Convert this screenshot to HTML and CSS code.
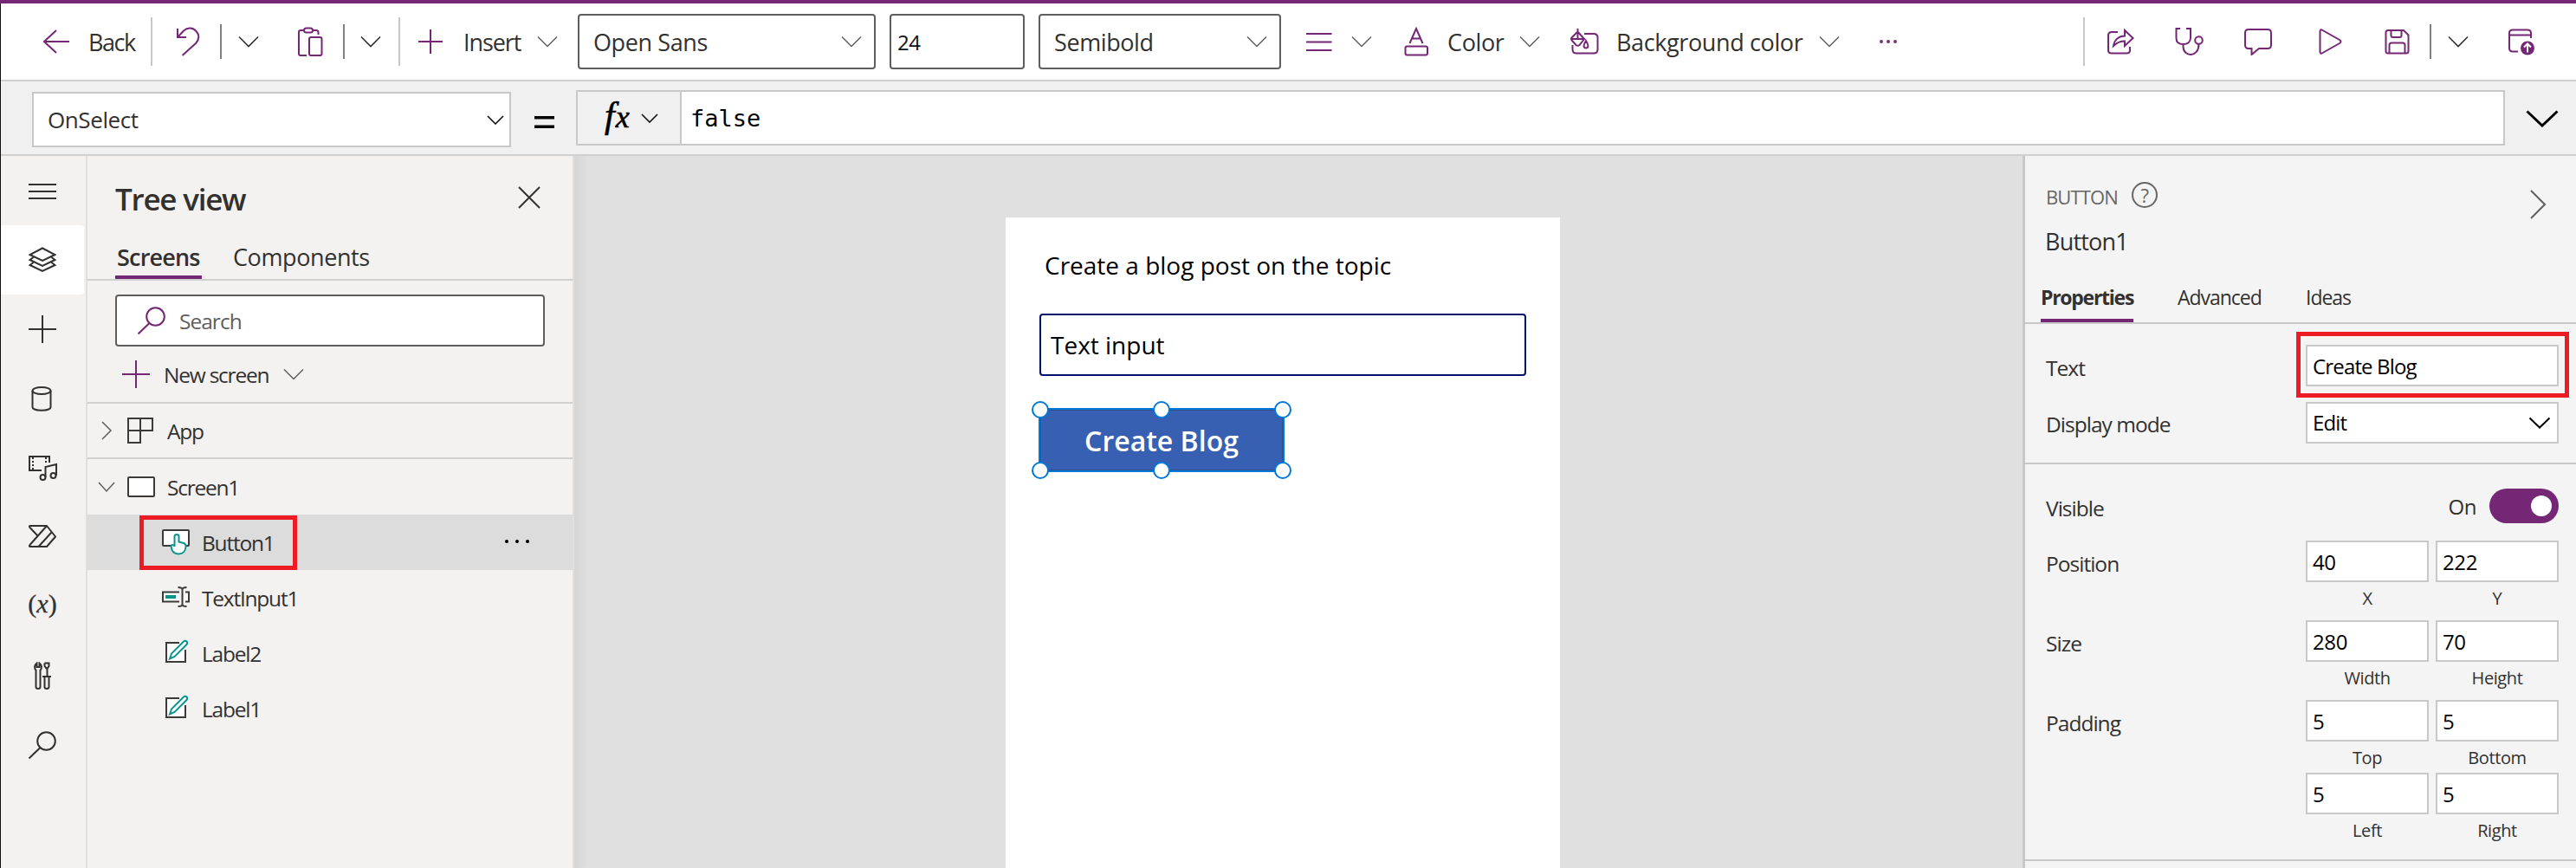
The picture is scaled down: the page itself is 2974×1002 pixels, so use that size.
FILE: index.html
```html
<!DOCTYPE html>
<html lang="en">
<head>
<meta charset="utf-8">
<title>Tree view</title>
<link rel="stylesheet" href="styles.css">
</head>
<body>
<svg class="defs" width="0" height="0">
  <symbol id="chev" viewBox="0 0 24 14"><path d="M1 1.5 12 12.5 23 1.5"/></symbol>
  <symbol id="pencil" viewBox="0 0 32 32"><path class="ink fill" d="M20 5H5V27H27V13"/><path class="halo" d="M10 23 27 6"/><path class="teal fill" d="M9 23.500 11 17.500 25 3.500C27.500 1.500 30.500 4.500 28.500 7L14.500 21Z"/></symbol>
</svg>
<div class="topline"></div>
<div class="app">
  <header class="toolbar">
    <svg class="i p" width="32" height="30" viewBox="0 0 32 30"><path d="M30 15H1M15 2 1 15 15 28"/></svg>
    <span class="t28 back">Back</span>
    <i class="sep"></i>
    <svg class="i p" width="28" height="34" viewBox="0 0 28 34"><path d="M2 2V12H12M2 12 9 4.500C14 0 20 1 23.500 5C27.500 9.500 27 14.500 23 19L7.500 33"/></svg>
    <i class="bar"></i>
    <svg class="i k" width="24" height="14"><use href="#chev"/></svg>
    <svg class="i p" width="29" height="34" viewBox="0 0 29 34"><path d="M7 4H3Q1 4 1 6V31Q1 33 3 33H10M17 4H21Q23.500 4 23.500 6V9"/><rect x="7" y="1.500" width="10" height="5" rx="2.500"/><rect x="13" y="12" width="14.500" height="21" rx="2"/></svg>
    <i class="bar"></i>
    <svg class="i k" width="24" height="14"><use href="#chev"/></svg>
    <i class="sep"></i>
    <svg class="i p" width="30" height="30" viewBox="0 0 30 30"><path d="M15 1V29M1 15H29"/></svg>
    <span class="t28 insert">Insert</span>
    <svg class="i g" width="24" height="14"><use href="#chev"/></svg>
    <div class="combo font"><span class="t28">Open Sans</span><svg class="i g" width="24" height="14"><use href="#chev"/></svg></div>
    <div class="combo size"><span class="t24">24</span></div>
    <div class="combo weight"><span class="t28">Semibold</span><svg class="i g" width="24" height="14"><use href="#chev"/></svg></div>
    <svg class="i p" width="31" height="24" viewBox="0 0 31 24"><path d="M1 3H30.500M1 12.500H30.500M1 22H30.500"/></svg>
    <svg class="i g" width="24" height="14"><use href="#chev"/></svg>
    <svg class="i p" width="29" height="34" viewBox="0 0 29 34"><path d="M6.500 19 14 2 21.500 19M9 13.500H19"/><rect x="1.500" y="22.500" width="25.500" height="10" rx="2"/></svg>
    <span class="t28 color">Color</span>
    <svg class="i g" width="24" height="14"><use href="#chev"/></svg>
    <svg class="i p bucket" width="34" height="32" viewBox="0 0 34 32"><path d="M16 7H27Q31.500 7 31.500 11.500V25Q31.500 29.500 27 29.500H7Q2.500 29.500 2.500 25V20M8.500 1V13M1.500 13H16L8.500 4.500 2 11Q0 13 2 15L6.500 20Q8.500 21.500 10.500 20L16 13M18 15C14.500 20.500 15 23.500 18 23.500S21.500 20.500 18 15Z"/></svg>
    <span class="t28 bg">Background color</span>
    <svg class="i g" width="24" height="14"><use href="#chev"/></svg>
    <svg class="i dots" width="22" height="6" viewBox="0 0 22 6"><circle cx="3" cy="3" r="1.900"/><circle cx="11" cy="3" r="1.900"/><circle cx="19" cy="3" r="1.900"/></svg>
    <i class="sep"></i>
    <svg class="i p" width="31" height="30" viewBox="0 0 31 30"><path d="M12 4H5Q1 4 1 8V25Q1 28.500 5 28.500H22Q26 28.500 26 25V21M7 20C8 13 13 8.500 20 8.500V2L29.500 11 20 20V14.500C15 14.500 11 16 7 20Z"/></svg>
    <svg class="i p" width="33" height="34" viewBox="0 0 33 34"><path d="M6 2H1.500V13Q1.500 20 9.500 20T18 13V2H13M9.500 20V23C9.500 35 27.500 36 27.500 20"/><circle cx="27.500" cy="15.500" r="4.300"/></svg>
    <svg class="i p" width="33" height="32" viewBox="0 0 33 32"><path d="M5 2H27Q31 2 31 6V20Q31 24 27 24H17L8.500 31V24H5Q1 24 1 20V6Q1 2 5 2Z"/></svg>
    <svg class="i p" width="28" height="30" viewBox="0 0 28 30"><path d="M1.500 3.500Q1.500 0 4.500 2L24 13Q27 15 24 17L4.500 28Q1.500 30 1.500 26.500Z"/></svg>
    <svg class="i p" width="29" height="30" viewBox="0 0 29 30"><path d="M4 2H22L27.500 7.500V26Q27.500 28.500 25 28.500H4Q1.500 28.500 1.500 26V4.500Q1.500 2 4 2ZM7.500 2V8Q7.500 10 9.500 10H17.500Q19.500 10 19.500 8V2M5.500 28V19Q5.500 16.500 8 16.500H21Q23.500 16.500 23.500 19V28"/></svg>
    <i class="bar"></i>
    <svg class="i k" width="24" height="14"><use href="#chev"/></svg>
    <svg class="i p" width="32" height="32" viewBox="0 0 32 32"><path d="M11 27.500H5Q1 27.500 1 23.500V6Q1 2.500 5 2.500H22Q26 2.500 26 6V12M1 8.500H26"/><circle class="solid" cx="22" cy="23.500" r="8"/><path class="w" d="M22 28.500V19M18 22.500 22 18.500 26 22.500"/></svg>
  </header>

  <section class="formula">
    <div class="prop"><span class="t26">OnSelect</span><svg class="i b" width="20" height="11" viewBox="0 0 20 11"><path d="M1 1 10 10 19 1"/></svg></div>
    <svg class="eq" width="23" height="14" viewBox="0 0 23 14"><path d="M0 1.800H23M0 12.200H23"/></svg>
    <div class="fxbox">
      <div class="fx"><span class="fxs"><b>f</b>x</span><svg class="i b" width="20" height="11" viewBox="0 0 20 11"><path d="M1 1 10 10 19 1"/></svg></div>
      <div class="code">false</div>
    </div>
    <svg class="i big" width="38" height="20" viewBox="0 0 38 20"><path d="M1.500 1.500 19 18 36.500 1.500"/></svg>
  </section>

  <main class="main">
    <nav class="rail">
      <div><svg width="32" height="32" viewBox="0 0 32 32"><path d="M0 9H32M0 17H32M0 25H32"/></svg></div>
      <div class="on"><svg width="32" height="32" viewBox="0 0 32 32"><path d="M16 2.500 30.500 10 16 17 1.500 10ZM5.500 13 1.500 16 16 23 30.500 16 26.500 13M5.500 19 1.500 22 16 29 30.500 22 26.500 19"/></svg></div>
      <div><svg width="32" height="32" viewBox="0 0 32 32"><path d="M16 0V32M0 16H32"/></svg></div>
      <div><svg width="32" height="32" viewBox="0 0 32 32"><ellipse cx="15" cy="7" rx="10.500" ry="4"/><path d="M4.500 7V26C4.500 31 25.500 31 25.500 26V7"/></svg></div>
      <div><svg width="34" height="32" viewBox="0 0 34 32"><path d="M16 19H2V3H25V10M20.500 27V15L33 12V25"/><path stroke-dasharray="2 2" d="M6 4V18M21 4V12"/><circle cx="17.500" cy="27" r="3"/><circle cx="29.500" cy="25" r="3"/></svg></div>
      <div><svg width="32" height="32" viewBox="0 0 32 32"><path stroke-linejoin="round" d="M2 3H21L31 15.500 21 27H2Q0 27 1.500 25L21 3M11 15 1.500 5Q0 3 2 3M11.500 27 27 10"/></svg></div>
      <div><span class="var">(<i>x</i>)</span></div>
      <div><svg width="32" height="32" viewBox="0 0 32 32"><path d="M9.500 1.500V6H12.500V1.500C15.500 3.500 15.500 8 13.500 9.500V29Q13.500 31 11 31T8.500 29V9.500C6.500 8 6.500 3.500 9.500 1.500ZM18.500 1.500H23.500V5L21.500 8V17M21 8 18.500 5V1.500M16 17H26M18.500 17V29Q18.500 31 21 31T23.500 29V17"/></svg></div>
      <div><svg width="32" height="32" viewBox="0 0 32 32"><circle cx="20.500" cy="11.500" r="10.300"/><path d="M13 19.500 .5 31.500"/></svg></div>
    </nav>

    <aside class="tree">
      <div class="head"><h1>Tree view</h1><svg class="i n" width="26" height="26" viewBox="0 0 26 26"><path d="M1 1 25 25M25 1 1 25"/></svg></div>
      <div class="tabs"><span class="tab act">Screens</span><span class="tab">Components</span></div>
      <div class="search"><svg class="i p" width="32" height="32" viewBox="0 0 32 32"><circle cx="20.500" cy="11.500" r="10.300"/><path d="M13 19.500 .5 31.500"/></svg><span class="t25">Search</span></div>
      <div class="new"><svg class="i p" width="32" height="32" viewBox="0 0 32 32"><path d="M16 0V32M0 16H32"/></svg><span class="t25">New screen</span><svg class="i g" width="24" height="14"><use href="#chev"/></svg></div>
      <div class="row approw"><svg class="i g tw" width="20" height="22" viewBox="0 0 20 22"><path d="M5 1 15 11 5 21"/></svg><svg class="ic" width="32" height="32" viewBox="0 0 32 32"><path class="ink" d="M1 2H29V16H1ZM15 2V30H1V16"/></svg><span class="t25">App</span></div>
      <div class="row"><svg class="i g tw" width="20" height="14" viewBox="0 0 20 14"><path d="M1 2 10 12 19 2"/></svg><svg class="ic" width="32" height="32" viewBox="0 0 32 32"><rect class="ink fill" x="1" y="5" width="30" height="22" rx="1"/></svg><span class="t25">Screen1</span></div>
      <div class="row kid sel"><svg class="ic" width="32" height="36" viewBox="0 0 32 36"><rect class="ink fill" x="1" y="5" width="30" height="18" rx="1"/><path class="teal fill" d="M14.500 24V12.500Q14.500 10 17 10T19.500 12.500V18.500L25 20Q28 21 27.500 24C27 29 25.500 32.500 19 32.500C13.500 32.500 11 29 10.500 23Q12 21 14.500 23.500"/></svg><span class="t25">Button1</span>
        <svg class="more" width="32" height="6" viewBox="0 0 32 6"><circle cx="4" cy="3" r="2"/><circle cx="16" cy="3" r="2"/><circle cx="28" cy="3" r="2"/></svg><i class="mark"></i></div>
      <div class="row kid"><svg class="ic" width="32" height="32" viewBox="0 0 32 32"><path class="ink fill" d="M20 10.500H1V21.500H20M27 10.500H31V21.500H27"/><rect class="tealf" x="4" y="14" width="12" height="4"/><path class="ink" d="M18.500 5Q23.500 5 23.500 7.500V24.500Q23.500 27 18.500 27M28.500 5Q23.500 5 23.500 7.500M28.500 27Q23.500 27 23.500 24.500"/></svg><span class="t25">TextInput1</span></div>
      <div class="row kid"><svg class="ic" width="32" height="32"><use href="#pencil"/></svg><span class="t25">Label2</span></div>
      <div class="row kid"><svg class="ic" width="32" height="32"><use href="#pencil"/></svg><span class="t25">Label1</span></div>
    </aside>

    <section class="canvas">
      <div class="screen">
        <p class="label">Create a blog post on the topic</p>
        <div class="input">Text input</div>
        <div class="button">Create Blog<i class="h tl"></i><i class="h tc"></i><i class="h tr"></i><i class="h bl"></i><i class="h bc"></i><i class="h br"></i></div>
      </div>
    </section>

    <aside class="props">
      <div class="phead">
        <div class="kind"><span class="t23">BUTTON</span><span class="help">?</span></div>
        <div class="name">Button1</div>
        <svg class="i g go" width="19" height="34" viewBox="0 0 19 34"><path d="M1 1 17 17 1 33"/></svg>
      </div>
      <div class="ptabs"><span class="act">Properties</span><span class="adv">Advanced</span><span class="idea">Ideas</span></div>
      <div class="group g1">
        <div class="line"><span class="lab">Text</span><div class="field wide">Create Blog<i class="mark"></i></div></div>
        <div class="line"><span class="lab">Display mode</span><div class="field wide drop">Edit<svg class="i" width="26" height="14" viewBox="0 0 26 14"><path d="M1.500 1.500 13 12.500 24.500 1.500"/></svg></div></div>
      </div>
      <div class="group g2">
        <div class="line vis"><span class="lab">Visible</span><span class="onlab">On</span><span class="toggle"><i></i></span></div>
        <div class="pair"><span class="lab">Position</span><div class="cell"><div class="field">40</div><small>X</small></div><div class="cell"><div class="field">222</div><small>Y</small></div></div>
        <div class="pair"><span class="lab">Size</span><div class="cell"><div class="field">280</div><small>Width</small></div><div class="cell"><div class="field">70</div><small>Height</small></div></div>
        <div class="pair tight"><span class="lab">Padding</span><div class="cell"><div class="field">5</div><small>Top</small></div><div class="cell"><div class="field">5</div><small>Bottom</small></div></div>
        <div class="pair"><span class="lab"></span><div class="cell"><div class="field">5</div><small>Left</small></div><div class="cell"><div class="field">5</div><small>Right</small></div></div>
      </div>
    </aside>
  </main>
</div>
</body>
</html>
```
FILE: styles.css
```css
* { box-sizing: border-box; }
body { margin: 0; width: 2974px; height: 1002px; overflow: hidden; background: #fff; font-family: "Open Sans", "Noto Sans", sans-serif; color: #323130; letter-spacing: -0.025em; }
.defs { display: block; height: 0; }
.topline { height: 4px; background: #742774; }
.app { border-left: 1px solid #111; height: 998px; display: flex; flex-direction: column; }
span { white-space: nowrap; }
.i, .rail svg { fill: none; stroke-width: 2; flex: none; display: block; }
.p { stroke: #742774; }
.g { stroke: #605e5c; stroke-width: 1.5; }
.k { stroke: #323130; stroke-width: 1.6; }
.b { stroke: #111; stroke-width: 1.6; }
.n { stroke: #323130; }
.solid { fill: #742774; stroke: none; }
.w { stroke: #fff; }
.ink { stroke: #3b3a39; stroke-width: 2; fill: none; }
.teal { stroke: #0a9490; stroke-width: 2; fill: none; }
.halo { stroke: #fff; stroke-width: 9; }
.tealf { fill: #0a9490; }
.fill { fill: #fff; }
.i.dots { fill: #742774; }
.t28 { font-size: 27px; line-height: 40px; padding-top: 2px; margin-left: -1px; }
.back { letter-spacing: -0.055em; }
.insert { letter-spacing: -0.04em; }
.color, .bg { letter-spacing: -0.014em; }
.weight .t28 { letter-spacing: -0.015em; }
.t26 { font-size: 26px; line-height: 40px; }
.t25 { font-size: 24.500px; line-height: 36px; padding-top: 2px; margin-left: -1px; letter-spacing: -0.05em; }
.t24 { font-size: 24px; line-height: 40px; color: #111; padding-top: 2px; }
.t23 { font-size: 22px; line-height: 32px; letter-spacing: -0.04em; }

.toolbar { height: 90px; flex: none; border-bottom: 2px solid #d0d0d0; padding-left: 49px; display: grid; align-items: center; justify-items: start;
  grid-template-columns: 53px 71px 29px 51px 21px 69px 52px 20px 44px 22px 54px 84px 47px 360px 172px 308px 53px 61px 51px 82px 59px 54px 233px 69px 236px 28px 78px 80px 86px 76px 52px 21px 70px auto; }
.sep { width: 2px; height: 56px; background: #c8c8c8; }
.bar { width: 2px; height: 40px; background: #808080; }
.combo { height: 64px; border: 2px solid #605e5c; border-radius: 4px; display: flex; align-items: center; justify-content: space-between; background: #fff; }
.combo.font { width: 344px; padding: 0 14px 0 17px; }
.combo.size { width: 156px; padding-left: 7px; }
.combo.weight { width: 280px; padding: 0 14px 0 17px; }

.formula { height: 86px; flex: none; background: #f0f0f0; border-bottom: 2px solid #d0d0d0; display: flex; align-items: flex-start; padding: 10px 0 0 36px; }
.prop { width: 553px; height: 64px; margin-top: 2px; border: 2px solid #c8c8c8; background: #fff; display: flex; align-items: center; justify-content: space-between; padding: 0 6px 0 16px; }
.eq { margin: 30px 25px 0 27px; stroke: #000; stroke-width: 3.500; }
.fxbox { width: 2227px; height: 64px; border: 2px solid #c8c8c8; display: flex; }
.fx { width: 120px; border-right: 2px solid #c8c8c8; display: flex; align-items: center; padding-left: 31px; gap: 6px; }
.fxs { font: italic 36px/54px "Liberation Serif", serif; color: #000; width: 36px; height: 60px; letter-spacing: 0; -webkit-text-stroke: 0.6px #000; }
.fxs b { font-weight: 400; font-size: 42px; margin-right: 1px; }
.code { flex: 1; background: #fff; padding-left: 10px; font: 27px/61px "DejaVu Sans Mono", "Liberation Mono", monospace; color: #000; letter-spacing: 0; }
.big { stroke: #000; stroke-width: 3; margin: 23px 0 0 24px; }

.main { flex: 1; display: flex; min-height: 0; }
.rail { width: 100px; flex: none; background: #f3f2f1; border-right: 2px solid #e1dfdd; }
.rail div { width: 96px; height: 80px; display: flex; align-items: center; justify-content: center; border-radius: 4px; }
.rail .on { background: #fff; }
.rail svg { stroke: #323130; }
.var { font: 30px/40px "Liberation Serif", serif; letter-spacing: 0; padding-bottom: 7px; -webkit-text-stroke: 0.3px #323130; }
.tree { width: 562px; flex: none; background: #f3f2f1; border-right: 2px solid #e1dfdd; }
.head { height: 98px; padding: 25px 37px 0 32px; display: flex; justify-content: space-between; align-items: flex-start; }
h1 { margin: 0; font-size: 35px; font-weight: 600; line-height: 50px; letter-spacing: -0.035em; }
.head svg { margin-top: 10px; }
.tabs { height: 46px; border-bottom: 2px solid #d0d0d0; padding-left: 32px; display: flex; gap: 36px; }
.tab { font-size: 27px; line-height: 38px; }
.tabs .act { font-weight: 600; border-bottom: 4px solid #742774; width: 100px; padding-left: 2px; height: 44px; letter-spacing: -0.03em; }
.search { margin: 16px 0 0 32px; width: 496px; height: 60px; border: 2px solid #605e5c; border-radius: 4px; background: #fff; display: flex; align-items: center; gap: 17px; padding-left: 24px; color: #605e5c; }
.search .t25 { letter-spacing: -0.04em; }
.new { height: 66px; border-bottom: 2px solid #d0d0d0; display: flex; align-items: center; padding-left: 40px; gap: 17px; }
.row { height: 64px; display: flex; align-items: center; position: relative; padding-left: 12px; }
.row .ic { margin: 0 15px 0 14px; }
.approw { border-bottom: 2px solid #d0d0d0; }
.kid { padding-left: 72px; }
.kid .ic { margin-bottom: 3px; }
.kid .t25 { padding-top: 1px; }
.sel { background: #dcdcdc; }
.more { margin: 0 48px 3px auto; }
.mark { position: absolute; border: 5px solid #ed1c24; }
.sel .mark { left: 60px; top: 1px; width: 182px; height: 63px; }

.canvas { flex: 1; background: linear-gradient(90deg, #d6d6d6, #e0e0e0 16px); padding: 71px 0 0 498px; }
.screen { width: 640px; height: 100%; background: #fff; padding: 35px 0 0 39px; color: #000; letter-spacing: 0; }
.label { margin: 0 0 0 6px; font-size: 28px; line-height: 40px; }
.input { margin-top: 36px; width: 562px; height: 72px; border: 2px solid #00126b; border-radius: 4px; font-size: 28px; line-height: 69px; padding-left: 11px; }
.button { position: relative; margin: 37px 0 0 -1px; width: 284px; height: 74px; background: #3860b2; border: 2px solid #0078d7; box-shadow: inset 0 0 0 1px #2c4f92; color: #fff; font-size: 32px; font-weight: 600; line-height: 72px; text-align: center; }
.h { position: absolute; width: 20px; height: 20px; border: 2px solid #0078d7; border-radius: 50%; background: #fff; }
.tl, .tc, .tr { top: -10px; }
.bl, .bc, .br { bottom: -10px; }
.tl, .bl { left: -10px; }
.tc, .bc { left: 130px; }
.tr, .br { right: -10px; }

.props { width: 639px; flex: none; background: #f4f4f4; border-left: 3px solid #c8c8c8; }
.phead { height: 150px; padding: 28px 0 0 24px; position: relative; }
.kind { display: flex; align-items: center; color: #666; height: 36px; gap: 17px; }
.kind .t23 { padding-top: 2px; width: 82px; }
.help { width: 30px; height: 30px; border: 2px solid #666; border-radius: 50%; text-align: center; font-size: 22px; line-height: 26px; margin-top: -2px; }
.name { font-size: 27px; line-height: 40px; margin: 15px 0 0 -1px; letter-spacing: -0.03em; }
.go { position: absolute; left: 583px; top: 39px; stroke-width: 2; }
.ptabs { height: 44px; border-bottom: 2px solid #c8c8c8; padding-left: 18px; font-size: 23px; line-height: 26px; letter-spacing: -0.045em; display: grid; grid-template-columns: 158px 148px auto; }
.ptabs .act { font-weight: 700; width: 107px; height: 42px; border-bottom: 4px solid #742774; letter-spacing: -0.055em; }
.group { border-bottom: 2px solid #c8c8c8; padding: 24px 20px 0 24px; }
.g1 { height: 162px; }
.g2 { height: 458px; padding-top: 28px; }
.lab { font-size: 24.500px; line-height: 54px; flex: 1; letter-spacing: -0.04em; }
.line { display: flex; height: 48px; margin-bottom: 18px; }
.line + .line .lab { line-height: 52px; }
.field { position: relative; width: 142px; height: 48px; border: 2px solid #c8c8c8; background: #fff; color: #000; font-size: 24px; line-height: 46px; padding-left: 6px; }
.wide { width: 292px; letter-spacing: -0.035em; }
.wide .mark { left: -13px; top: -17px; width: 315px; height: 76px; }
.drop { display: flex; justify-content: space-between; align-items: center; padding-right: 7px; }
.drop svg { stroke: #000; }
.vis { height: 40px; margin-bottom: 20px; }
.vis .lab { line-height: 46px; }
.onlab { font-size: 24px; line-height: 41px; margin-right: 15px; }
.toggle { width: 80px; height: 40px; border-radius: 20px; background: #742774; padding: 8px; }
.toggle i { display: block; width: 24px; height: 24px; border-radius: 50%; background: #fff; margin-left: 40px; }
.pair { display: flex; gap: 8px; height: 92px; }
.pair.tight { height: 84px; }
.cell { width: 142px; text-align: center; }
.cell .field { text-align: left; }
small { display: block; font-size: 20px; line-height: 38px; }
```
